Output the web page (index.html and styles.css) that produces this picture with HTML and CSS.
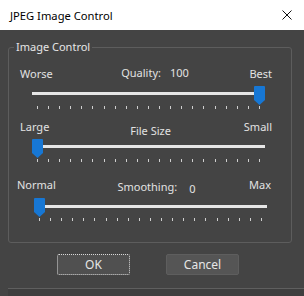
FILE: index.html
```html
<!DOCTYPE html>
<html lang="en">
<head>
    <meta charset="UTF-8">
    <title>JPEG Image Control</title>
    <link rel="stylesheet" href="styles.css">
</head>
<body>
    <div class="titlebar">
        <span class="title">JPEG Image Control</span>
        <svg class="close" width="10" height="10" viewBox="0 0 10 10">
            <path d="M0.5 0.5 L9.5 9.5 M9.5 0.5 L0.5 9.5" stroke="#111" stroke-width="1" fill="none"/>
        </svg>
    </div>

    <div class="content">
        <fieldset class="group">
            <legend>Image Control</legend>

            <div class="slider first">
                <div class="labels">
                    <span>Worse</span>
                    <span class="mid up">Quality:<span class="value">100</span></span>
                    <span>Best</span>
                </div>
                <div class="rail">
                    <div class="track"></div>
                    <div class="thumb-zone">
                        <svg class="thumb" style="left: 100%" width="11" height="19" viewBox="0 0 11 19">
                            <path d="M1 0 H10 Q11 0 11 1 V14 L5.5 19 L0 14 V1 Q0 0 1 0 Z" fill="#1777d4"/>
                        </svg>
                    </div>
                </div>
                <div class="ticks"></div>
            </div>

            <div class="slider second">
                <div class="labels">
                    <span>Large</span>
                    <span class="mid down">File Size</span>
                    <span>Small</span>
                </div>
                <div class="rail">
                    <div class="track"></div>
                    <div class="thumb-zone">
                        <svg class="thumb" style="left: 0%" width="11" height="19" viewBox="0 0 11 19">
                            <path d="M1 0 H10 Q11 0 11 1 V14 L5.5 19 L0 14 V1 Q0 0 1 0 Z" fill="#1777d4"/>
                        </svg>
                    </div>
                </div>
                <div class="ticks"></div>
            </div>

            <div class="slider third">
                <div class="labels">
                    <span>Normal</span>
                    <span class="mid down2">Smoothing:<span class="value">0</span></span>
                    <span>Max</span>
                </div>
                <div class="rail">
                    <div class="track"></div>
                    <div class="thumb-zone">
                        <svg class="thumb" style="left: 0%" width="11" height="19" viewBox="0 0 11 19">
                            <path d="M1 0 H10 Q11 0 11 1 V14 L5.5 19 L0 14 V1 Q0 0 1 0 Z" fill="#1777d4"/>
                        </svg>
                    </div>
                </div>
                <div class="ticks"></div>
            </div>
        </fieldset>

        <div class="buttons">
            <button class="btn focused">OK</button>
            <button class="btn">Cancel</button>
        </div>
    </div>

    <div class="footer"></div>

    <script>
        document.querySelectorAll('.ticks').forEach(function (row) {
            for (let i = 0; i < 21; i++) {
                const t = document.createElement('span');
                t.className = 'tick';
                row.appendChild(t);
            }
        });
    </script>
</body>
</html>
```

FILE: styles.css
```css
body {
    margin: 0;
    width: 304px;
    height: 296px;
    overflow: hidden;
    background-color: #444444;
    font-family: "Noto Sans", "Open Sans", sans-serif;
    font-size: 11px;
    color: #e2e2e2;
}
.titlebar {
    height: 30px;
    background-color: #ffffff;
    display: flex;
    align-items: center;
    justify-content: space-between;
    padding: 0 12px 0 10px;
    color: #000;
    font-size: 11.2px;
}
.close {
    display: block;
}
.content {
    padding: 9px 12px 0 8px;
}
.group {
    margin: 0;
    padding: 0 0 21px 0;
    border: 1px solid #5d5d5d;
    border-radius: 3px;
}
.group legend {
    margin-left: 5px;
    padding: 0 2px;
    height: 16px;
    line-height: 16px;
    color: #e6e6e6;
}
.slider {
    margin-left: 11px;
    margin-right: 19px;
}
.slider.first {
    margin-top: 11px;
}
.slider.second {
    margin-top: 10px;
}
.slider.third {
    margin-top: 15px;
    margin-left: 8px;
    margin-right: 20px;
}
.labels {
    display: flex;
    justify-content: space-between;
    align-items: flex-start;
    height: 16px;
    line-height: 16px;
    margin-bottom: 4px;
}
.third .labels {
    margin-bottom: 5px;
}
.mid {
    position: relative;
    left: 4px;
}
.mid.up {
    top: -1px;
}
.mid.down {
    top: 4px;
}
.mid.down2 {
    top: 2px;
}
.value {
    margin-left: 9px;
}
.third .mid .value {
    position: relative;
    top: 2px;
    margin-left: 12px;
}
.rail {
    display: flow-root;
    position: relative;
    height: 19px;
    margin: 0 7px 0 12px;
}
.third .rail {
    margin: 0 4px 0 17px;
}
.track {
    height: 3px;
    margin-top: 6px;
    background-color: #e6e6e6;
}
.third .track {
    margin-top: 7px;
}
.thumb-zone {
    position: absolute;
    top: 0;
    bottom: 0;
    left: 0;
    right: 11px;
}
.thumb {
    position: absolute;
    top: 0;
    display: block;
}
.ticks {
    display: flex;
    justify-content: space-between;
    height: 3px;
    margin: 1px 12px 0 17px;
}
.third .ticks {
    margin: 1px 9px 0 22px;
}
.tick {
    width: 1px;
    height: 3px;
    background-color: #cfcfcf;
}
.buttons {
    display: flex;
    gap: 36px;
    margin-top: 11px;
    padding-left: 49px;
}
.btn {
    width: 73px;
    height: 21px;
    padding: 0;
    font-family: inherit;
    font-size: 12px;
    color: #e6e6e6;
    background-color: #555555;
    border: 1px solid #5e5e5e;
    border-radius: 2px;
}
.btn.focused {
    background-color: #505050;
    border: 1px dotted #d8d8d8;
}
.footer {
    margin: 13px 0 0 8px;
    height: 7px;
    border-top: 1px solid #5f5f5f;
    background-color: #3e3e3e;
}
```
